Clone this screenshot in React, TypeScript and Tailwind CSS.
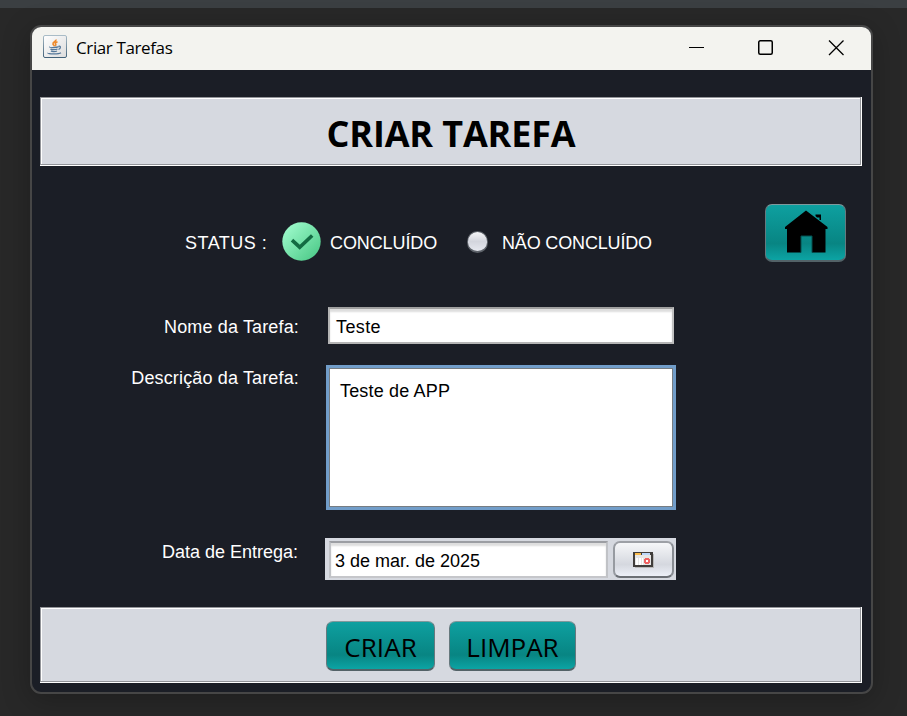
import type { ReactNode } from "react";

const sans = "font-['Liberation_Sans',Arial,sans-serif] text-[18px] leading-5 whitespace-nowrap";
const segoe = "font-['Open_Sans','Noto_Sans',sans-serif] whitespace-nowrap";

function EtchedPanel({ className, children }: { className: string; children: ReactNode }) {
  return (
    <div className={`border-r border-b border-white ${className}`}>
      <div className="h-full border border-[#929499]">
        <div className="flex h-full justify-center border-t border-l border-white bg-[#d6d9e0]">{children}</div>
      </div>
    </div>
  );
}

function TealButton({ className, children, label }: { className: string; children: ReactNode; label?: string }) {
  return (
    <button
      aria-label={label}
      className={`flex shrink-0 justify-center rounded-[7px] border border-b-2 border-t-[#7f999c] border-r-[#66797e] border-b-[#536267] border-l-[#66797e] bg-linear-to-b from-[#0ea0a0] via-[#088583] via-70% to-[#0ca4a4] text-black ${className}`}
    >
      {children}
    </button>
  );
}

function JavaIcon() {
  return (
    <svg className="mb-[3px]" width="24" height="24" viewBox="0 0 24 24" fill="none">
      <defs>
        <linearGradient id="javaBg" x1="0" y1="0" x2="1" y2="1">
          <stop offset="0" stopColor="#ffffff" />
          <stop offset="1" stopColor="#dcdcdc" />
        </linearGradient>
        <linearGradient id="javaEdge" x1="0" y1="0" x2="0" y2="1">
          <stop offset="0" stopColor="#a9bcc7" />
          <stop offset="1" stopColor="#43627a" />
        </linearGradient>
      </defs>
      <rect x="0.5" y="0.5" width="23" height="22" rx="1.500" fill="url(#javaBg)" stroke="url(#javaEdge)" />
      <path d="M13 4.500c.5 2-3.500 2.500-3 4.500.2 1 1.200 1.200 1.200 2.200M14.500 6.700c-2.500 1-2.500 1.700-1.800 2.500.5.700 0 1.200-.5 1.700" stroke="#ee8a2d" strokeWidth="1.600" />
      <path d="M7 11.800c-1.500 1 7 1 8.500 0M7.500 14c1 .9 5.500.9 7 0M8 16c1 .8 4.500.8 6 0M15.500 11.300c2.500-.7 2.500 2.200 0 3.200M5 17.800c-1 1.400 11 1.500 13 0" stroke="#55789a" strokeWidth="1.300" />
    </svg>
  );
}

function HomeIcon() {
  return (
    <svg width="44" height="44" viewBox="0 0 44 44">
      <path d="M22 0.500L43.500 17v2H41.500v23.500H28V26H17v16.500H3V19H1v-2z" />
      <path d="M31.500 4.500H37V10h-1.500V7.500h-2.500L31.500 6z" />
      <path d="M17 42.500V26h11v16.500" fill="none" stroke="#054f4f" strokeWidth="1" />
    </svg>
  );
}

function CheckIcon() {
  return (
    <svg width="40" height="40" viewBox="0 0 40 40">
      <defs>
        <linearGradient id="mint" x1="0.1" y1="0.1" x2="0.9" y2="0.9">
          <stop offset="0" stopColor="#9dfacb" />
          <stop offset="1" stopColor="#4fcb8a" />
        </linearGradient>
      </defs>
      <circle cx="20.500" cy="20.500" r="19.200" fill="url(#mint)" />
      <path d="M11 19.200l7.700 7L31.200 14.500" fill="none" stroke="#136b43" strokeWidth="3.600" />
    </svg>
  );
}

function CalendarIcon() {
  return (
    <svg width="21" height="16" viewBox="0 0 21 16" shapeRendering="crispEdges">
      <path d="M2 2h19v14H2z" fill="#b9b9b9" />
      <path d="M0 0h20v15H0z" fill="#403d3b" />
      <path d="M2 3h16v10H2z" fill="#e6e6e6" />
      <path d="M2 1h6v2H2z" fill="#fbbc4b" />
      <path d="M9 1h8v2H9z" fill="#bcd7fa" />
      <path d="M3 6h2v7H3zM6 6h2v7H6zM9 6h1v7H9z" fill="#fff" />
      <path d="M12 6h4v1h1v4h-1v1h-4v-1h-1V7h1z" fill="#ef6262" />
      <path d="M13 8h2v2h-2z" fill="#fff" />
    </svg>
  );
}

function WindowControls() {
  return (
    <svg className="mb-[2px]" width="158" height="17" viewBox="0 0 158 17" fill="none" stroke="#000">
      <path d="M1 8.500h15" />
      <rect x="70.750" y="1.750" width="13.500" height="13.500" rx="1.500" strokeWidth="1.500" />
      <path d="M141 1.500l14.500 14.500M155.500 1.500L141 16" strokeWidth="1.300" />
    </svg>
  );
}

export default function App() {
  return (
    <div className="flex h-[716px] w-[907px] flex-col overflow-hidden bg-[#282828]">
      <div className="h-2 shrink-0 bg-[#3b3f42]" />
      <main className="mt-[17px] ml-[30px] flex h-[669px] w-[843px] shrink-0 flex-col overflow-hidden rounded-[11px] border-2 border-[#464646] bg-[#1b1e26] shadow-[0_6px_28px_rgba(0,0,0,0.25)]">
        <header className="flex h-[43px] shrink-0 items-center bg-[#f3f3ef] pl-[11px]">
          <JavaIcon />
          <span className={`${segoe} mb-[2px] ml-[9px] w-[612px] text-[17px] leading-6 tracking-[-0.38px] text-black`}>Criar Tarefas</span>
          <WindowControls />
        </header>

        <div className="flex flex-col pt-[27px] pl-2">
          <EtchedPanel className="h-[69px] w-[822px]">
            <h1 className={`${segoe} mt-[10px] text-[36px] leading-[50px] font-bold tracking-[-0.15px] text-black`}>CRIAR TAREFA</h1>
          </EtchedPanel>

          <section className="mt-[37px] flex h-[59px] w-[806px] items-start text-white">
            <span className={`${sans} mt-[30px] ml-[145px] w-[96px] tracking-[0.5px]`}>STATUS :</span>
            <div className="mt-[18px]">
              <CheckIcon />
            </div>
            <span className={`${sans} mt-[30px] ml-[9px] w-[137px] tracking-[-0.1px]`}>CONCLUÍDO</span>
            <span className="mt-[28px] h-[22px] w-[21px] rounded-full border border-b-2 border-[#5d6269] bg-linear-to-b from-[#f6f6f8] via-[#d3d5dd] to-[#e6e8ef]" />
            <span className={`${sans} mt-[30px] ml-[14px] flex-1 tracking-[-0.16px]`}>NÃO CONCLUÍDO</span>
            <TealButton label="Início" className="mt-px h-[58px] w-[81px] pt-[5px]">
              <HomeIcon />
            </TealButton>
          </section>

          <section className="mt-[45px] grid grid-cols-[259px_351px] gap-x-[26px] text-white">
            <label className={`${sans} mt-[10px] text-right tracking-[0.15px]`}>Nome da Tarefa:</label>
            <div className={`${sans} ml-[3px] h-[37px] w-[346px] border-2 border-t-[#a0a0a0] border-r-[#c2c2c2] border-b-[#b5b5b5] border-l-[#b5b5b5] bg-white pt-2 pl-[6px] tracking-[0.4px] text-black shadow-[inset_0_3px_2px_#dedede]`}>
              Teste
            </div>

            <label className={`${sans} mt-[24px] text-right tracking-[0.15px]`}>Descrição da Tarefa:</label>
            <div className="mt-[21px] ml-px h-[145px] w-[350px] border-[3px] border-[#719dc9]">
              <div className={`${sans} h-full border border-[#777d82] bg-white pt-[12px] pl-[10px] tracking-[0.17px] text-black`}>Teste de APP</div>
            </div>

            <label className={`${sans} mt-[32px] pr-px text-right`}>Data de Entrega:</label>
            <div className="mt-[28px] flex h-[42px] w-[351px] gap-[5px] bg-[#d6d9e0] pt-[3px] pl-1 text-black">
              <div className={`${sans} h-[37px] w-[279px] border-2 border-t-[#9c9ea3] border-r-[#c0c2c6] border-b-[#c5c6ca] border-l-[#c0c2c6] bg-white pt-2 pl-1 shadow-[inset_0_3px_2px_#dedede]`}>
                3 de mar. de 2025
              </div>
              <button aria-label="Calendário" className="flex h-[37px] w-[61px] items-center justify-center rounded-[7px] border-2 border-t-[#9da0a6] border-r-[#888c92] border-b-[#6b6f75] border-l-[#979ba1] bg-linear-to-b from-[#f6f7f9] via-[#d5d8df] via-65% to-[#edf0f8]">
                <CalendarIcon />
              </button>
            </div>
          </section>

          <EtchedPanel className="mt-[27px] h-[76px] w-[822px]">
            <div className="mt-[12px] flex gap-[14px]">
              <TealButton className="h-[50px] w-[109px]">
                <span className={`${segoe} mt-[7px] text-[26px] leading-9 tracking-[0.1px]`}>CRIAR</span>
              </TealButton>
              <TealButton className="h-[50px] w-[127px]">
                <span className={`${segoe} mt-[7px] text-[26px] leading-9`}>LIMPAR</span>
              </TealButton>
            </div>
          </EtchedPanel>
        </div>
      </main>
    </div>
  );
}
